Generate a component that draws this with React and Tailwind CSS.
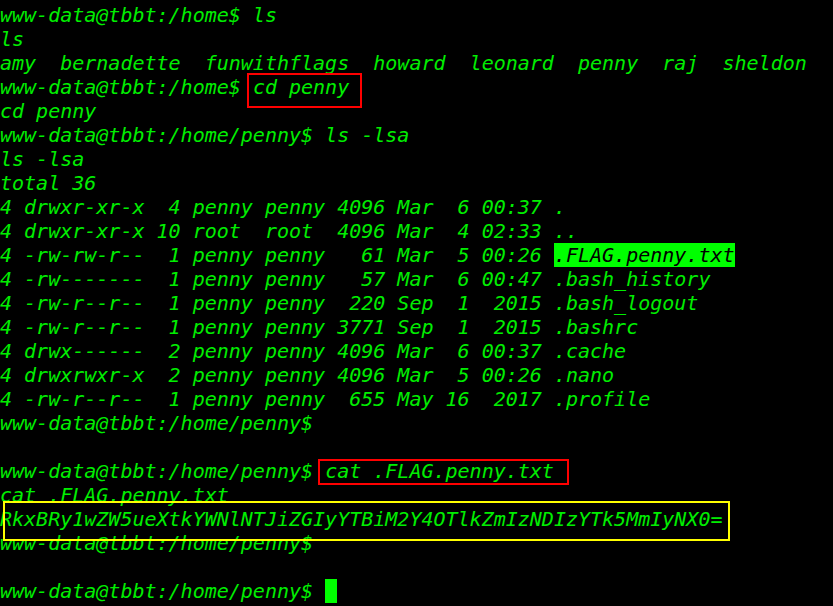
import React from "react";

const files = [
  "4 drwxr-xr-x  4 penny penny 4096 Mar  6 00:37 .",
  "4 drwxr-xr-x 10 root  root  4096 Mar  4 02:33 ..",
  "4 -rw-------  1 penny penny   57 Mar  6 00:47 .bash_history",
  "4 -rw-r--r--  1 penny penny  220 Sep  1  2015 .bash_logout",
  "4 -rw-r--r--  1 penny penny 3771 Sep  1  2015 .bashrc",
  "4 drwx------  2 penny penny 4096 Mar  6 00:37 .cache",
  "4 drwxrwxr-x  2 penny penny 4096 Mar  5 00:26 .nano",
  "4 -rw-r--r--  1 penny penny  655 May 16  2017 .profile",
];

const Line = ({ children }) => <div className="h-6 whitespace-pre">{children}</div>;

const App = () => {
  return (
    <div
      className="w-[833px] h-[606px] overflow-hidden bg-black pt-[3px] text-[20px] leading-6 italic text-[#00ee00]"
      style={{ fontFamily: '"DejaVu Sans Mono", "Liberation Mono", monospace' }}
    >
      <Line>www-data@tbbt:/home$ ls</Line>
      <Line>ls</Line>
      <Line>amy  bernadette  funwithflags  howard  leonard  penny  raj  sheldon</Line>
      <Line>
        www-data@tbbt:/home${" "}
        <span className="relative inline-block h-6">
          cd penny
          {/* red annotation box */}
          <span className="absolute -left-[6px] -right-[13px] -top-[2px] -bottom-[9px] border-2 border-[#ff0000]" />
        </span>
      </Line>
      <Line>cd penny</Line>
      <Line>www-data@tbbt:/home/penny$ ls -lsa</Line>
      <Line>ls -lsa</Line>
      <Line>total 36</Line>
      <Line>{files[0]}</Line>
      <Line>{files[1]}</Line>
      <Line>
        4 -rw-rw-r--  1 penny penny   61 Mar  5 00:26{" "}
        <span className="inline-block h-6 bg-[#00ff00] text-black">.FLAG.penny.txt</span>
      </Line>
      {files.slice(2).map((f) => (
        <Line key={f}>{f}</Line>
      ))}
      <Line>www-data@tbbt:/home/penny$</Line>
      <Line> </Line>
      <Line>
        www-data@tbbt:/home/penny${" "}
        <span className="relative inline-block h-6">
          cat .FLAG.penny.txt
          <span className="absolute -left-[7px] -right-[15px] top-0 -bottom-[2px] border-2 border-[#ff0000]" />
        </span>
      </Line>
      <Line>cat .FLAG.penny.txt</Line>
      <Line>
        <span className="relative inline-block h-6">
          RkxBRy1wZW5ueXtkYWNlNTJiZGIyYTBiM2Y4OTlkZmIzNDIzYTk5MmIyNX0=
          {/* yellow annotation box */}
          <span className="absolute left-[3px] -right-[8px] -top-[6px] -bottom-[10px] border-2 border-[#ffff00]" />
        </span>
      </Line>
      <Line>www-data@tbbt:/home/penny$</Line>
      <Line> </Line>
      <Line>
        www-data@tbbt:/home/penny${" "}
        <span className="inline-block w-3 h-6 align-top bg-[#00ff00]" />
      </Line>
    </div>
  );
};

export default App;
